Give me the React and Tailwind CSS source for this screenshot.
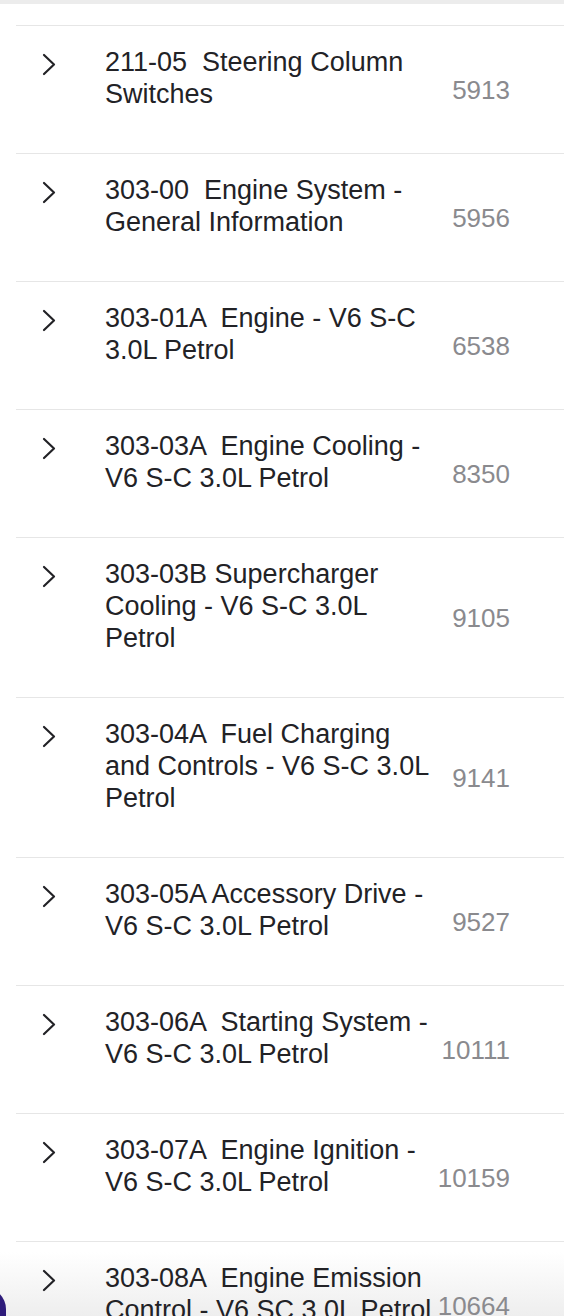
import React from 'react';

const rows = [
    { lines: ['211-05  Steering Column', 'Switches'], page: '5913' },
    { lines: ['303-00  Engine System -', 'General Information'], page: '5956' },
    { lines: ['303-01A  Engine - V6 S-C', '3.0L Petrol'], page: '6538' },
    { lines: ['303-03A  Engine Cooling -', 'V6 S-C 3.0L Petrol'], page: '8350' },
    { lines: ['303-03B Supercharger', 'Cooling - V6 S-C 3.0L', 'Petrol'], page: '9105' },
    { lines: ['303-04A  Fuel Charging', 'and Controls - V6 S-C 3.0L', 'Petrol'], page: '9141' },
    { lines: ['303-05A Accessory Drive -', 'V6 S-C 3.0L Petrol'], page: '9527' },
    { lines: ['303-06A  Starting System -', 'V6 S-C 3.0L Petrol'], page: '10111' },
    { lines: ['303-07A  Engine Ignition -', 'V6 S-C 3.0L Petrol'], page: '10159' },
    { lines: ['303-08A  Engine Emission', 'Control - V6 SC 3.0L Petrol'], page: '10664' },
];

const Chevron = () => (
    <svg width="14" height="23" viewBox="0 0 14 23" fill="none" className="block">
        <path d="M2 2 L12 11.5 L2 21" stroke="#222226" strokeWidth="2.2" strokeLinecap="round" strokeLinejoin="round" />
    </svg>
);

const Row = ({ lines, page }) => (
    <div className="flex items-center border-b border-[#e6e6e6] pr-[54px]">
        <div className="flex flex-1 min-w-0 pt-[20px] pb-[43px]">
            <div className="w-[89px] shrink-0 pl-[26px] pt-[7px]">
                <Chevron />
            </div>
            <div className="flex-1 min-w-0 text-[27px] leading-[32px] text-[#222226]">
                {lines.map((l, i) => (
                    <div key={i} className="whitespace-pre">{l}</div>
                ))}
            </div>
        </div>
        <div className="shrink-0 text-right text-[26px] leading-[32px] text-[#8a8a8e]">{page}</div>
    </div>
);

export default function App() {
    return (
        <div
            className="relative w-[564px] h-[1316px] overflow-hidden bg-white"
            style={{ fontFamily: '"Liberation Sans", Arial, sans-serif' }}
        >
            {/* soft shade at the bottom edge, behind the list */}
            <div className="absolute left-0 right-0 bottom-0 h-[64px] bg-gradient-to-b from-white to-[#eeeeee]" />
            <div className="relative">
                <div className="h-[4px] bg-[#ececec]" />
                <div className="ml-[16px] pt-[21px]">
                    <div className="border-t border-[#e6e6e6]">
                        {rows.map((r, i) => (
                            <Row key={i} {...r} />
                        ))}
                    </div>
                </div>
            </div>
            <div className="absolute left-[-36px] bottom-[-30px] w-[42px] h-[58px] rounded-full bg-[#2d1b7a]" />
        </div>
    );
}
